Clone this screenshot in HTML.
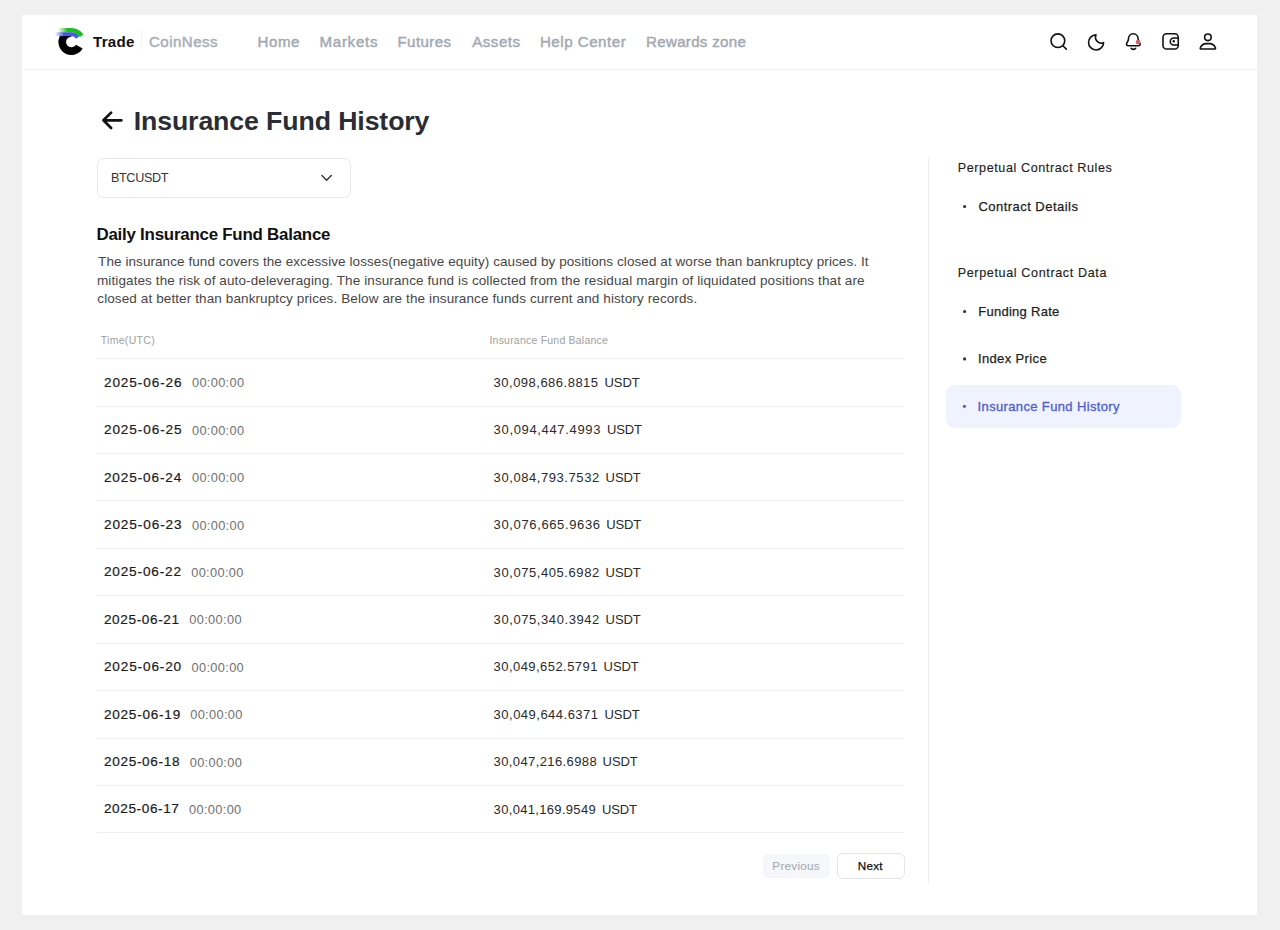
<!DOCTYPE html>
<html><head><meta charset="utf-8"><title>Insurance Fund History</title>
<style>
html,body{margin:0;padding:0;}
body{width:1280px;height:930px;background:#f0f0f0;position:relative;overflow:hidden;font-family:"Liberation Sans", sans-serif;}
.card{position:absolute;left:22px;top:15px;width:1235px;height:900px;background:#fff;}
.t{position:absolute;white-space:nowrap;}
.hdrline{position:absolute;left:24px;top:69px;width:1233px;height:1px;background:#f0f0f0;}
.sep{position:absolute;left:141px;top:30px;width:1px;height:19px;background:#f3f3f3;}
.hl{position:absolute;left:97px;width:807px;height:1px;background:#efefef;}
.select{position:absolute;left:97px;top:158px;width:252px;height:38px;border:1px solid #e8e8e8;border-radius:7px;}
.vdiv{position:absolute;left:928px;top:158px;width:1px;height:726px;background:#efefef;}
.active{position:absolute;left:946px;top:385px;width:235px;height:43px;background:#f0f2fe;border-radius:9px;}
.bprev{position:absolute;left:762.5px;top:854px;width:67px;height:24px;background:#f5f7fa;border-radius:5px;}
.bnext{position:absolute;left:837px;top:853px;width:65.5px;height:23.5px;border:1px solid #e5e5e5;border-radius:6px;}
.ov{position:absolute;left:0;top:0;}
</style></head><body>
<div class="card"></div>
<div class="hdrline"></div>
<div class="sep"></div>
<div class="select"></div>
<div class="vdiv"></div>
<div class="active"></div>
<div class="bprev"></div>
<div class="bnext"></div>
<div class="hl" style="top:358px"></div><div class="hl" style="top:406px"></div><div class="hl" style="top:453px"></div><div class="hl" style="top:500px"></div><div class="hl" style="top:548px"></div><div class="hl" style="top:595px"></div><div class="hl" style="top:643px"></div><div class="hl" style="top:690px"></div><div class="hl" style="top:738px"></div><div class="hl" style="top:785px"></div><div class="hl" style="top:832px"></div>
<div id="trade" class="t" style="left:93.09px;top:34.22px;font-size:15.1px;line-height:15.1px;color:#111111;font-weight:700;letter-spacing:0.237px;">Trade</div>
<div id="coinness" class="t" style="left:148.98px;top:34.22px;font-size:15.1px;line-height:15.1px;color:#a9aeb8;font-weight:400;letter-spacing:0.446px;-webkit-text-stroke:0.5px #a9aeb8;">CoinNess</div>
<div id="home" class="t" style="left:257.47px;top:34.22px;font-size:15.1px;line-height:15.1px;color:#a3a9b2;font-weight:400;letter-spacing:0.585px;-webkit-text-stroke:0.45px #a3a9b2;">Home</div>
<div id="markets" class="t" style="left:319.50px;top:34.22px;font-size:15.1px;line-height:15.1px;color:#a3a9b2;font-weight:400;letter-spacing:0.710px;-webkit-text-stroke:0.45px #a3a9b2;">Markets</div>
<div id="futures" class="t" style="left:397.48px;top:34.22px;font-size:15.1px;line-height:15.1px;color:#a3a9b2;font-weight:400;letter-spacing:0.421px;-webkit-text-stroke:0.45px #a3a9b2;">Futures</div>
<div id="assets" class="t" style="left:472.27px;top:34.22px;font-size:15.1px;line-height:15.1px;color:#a3a9b2;font-weight:400;letter-spacing:0.493px;-webkit-text-stroke:0.45px #a3a9b2;">Assets</div>
<div id="help" class="t" style="left:539.92px;top:34.22px;font-size:15.1px;line-height:15.1px;color:#a3a9b2;font-weight:400;letter-spacing:0.524px;-webkit-text-stroke:0.45px #a3a9b2;">Help Center</div>
<div id="rewards" class="t" style="left:646.10px;top:34.22px;font-size:15.1px;line-height:15.1px;color:#a3a9b2;font-weight:400;letter-spacing:0.294px;-webkit-text-stroke:0.45px #a3a9b2;">Rewards zone</div>
<div id="title" class="t" style="left:133.68px;top:107.60px;font-size:26.7px;line-height:26.7px;color:#2a2d33;font-weight:700;letter-spacing:-0.108px;">Insurance Fund History</div>
<div id="btc" class="t" style="left:110.93px;top:172.33px;font-size:12.6px;line-height:12.6px;color:#333333;font-weight:400;letter-spacing:-0.321px;">BTCUSDT</div>
<div id="h2" class="t" style="left:96.43px;top:226.79px;font-size:16.9px;line-height:16.9px;color:#111111;font-weight:700;letter-spacing:-0.231px;">Daily Insurance Fund Balance</div>
<div id="p0" class="t" style="left:98.09px;top:255.07px;font-size:13.5px;line-height:13.5px;color:#464646;font-weight:400;letter-spacing:0.076px;">The insurance fund covers the excessive losses(negative equity) caused by positions closed at worse than bankruptcy prices. It</div>
<div id="p1" class="t" style="left:97.00px;top:273.57px;font-size:13.5px;line-height:13.5px;color:#464646;font-weight:400;letter-spacing:0.106px;">mitigates the risk of auto-deleveraging. The insurance fund is collected from the residual margin of liquidated positions that are</div>
<div id="p2" class="t" style="left:97.27px;top:291.97px;font-size:13.5px;line-height:13.5px;color:#464646;font-weight:400;letter-spacing:0.111px;">closed at better than bankruptcy prices. Below are the insurance funds current and history records.</div>
<div id="th1" class="t" style="left:100.68px;top:334.86px;font-size:10.5px;line-height:10.5px;color:#a0a0a0;font-weight:400;letter-spacing:0.308px;">Time(UTC)</div>
<div id="th2" class="t" style="left:489.44px;top:334.86px;font-size:10.5px;line-height:10.5px;color:#a0a0a0;font-weight:400;letter-spacing:0.217px;">Insurance Fund Balance</div>
<div id="d0" class="t" style="left:103.92px;top:375.74px;font-size:13.6px;line-height:13.6px;color:#1b1b1b;font-weight:400;letter-spacing:0.912px;-webkit-text-stroke:0.2px #1b1b1b;">2025-06-26</div>
<div id="t0" class="t" style="left:191.94px;top:377.41px;font-size:12.8px;line-height:12.8px;color:#707070;font-weight:400;letter-spacing:0.329px;">00:00:00</div>
<div id="a0" class="t" style="left:493.61px;top:375.90px;font-size:13px;line-height:13px;color:#2a2a2a;font-weight:400;letter-spacing:0.489px;">30,098,686.8815</div>
<div id="u0" class="t" style="left:604.51px;top:375.90px;font-size:13px;line-height:13px;color:#2a2a2a;font-weight:400;letter-spacing:-0.058px;">USDT</div>
<div id="d1" class="t" style="left:103.92px;top:423.14px;font-size:13.6px;line-height:13.6px;color:#1b1b1b;font-weight:400;letter-spacing:0.911px;-webkit-text-stroke:0.2px #1b1b1b;">2025-06-25</div>
<div id="t1" class="t" style="left:191.94px;top:424.81px;font-size:12.8px;line-height:12.8px;color:#707070;font-weight:400;letter-spacing:0.329px;">00:00:00</div>
<div id="a1" class="t" style="left:493.61px;top:423.30px;font-size:13px;line-height:13px;color:#2a2a2a;font-weight:400;letter-spacing:0.658px;">30,094,447.4993</div>
<div id="u1" class="t" style="left:606.88px;top:423.30px;font-size:13px;line-height:13px;color:#2a2a2a;font-weight:400;letter-spacing:-0.090px;">USDT</div>
<div id="d2" class="t" style="left:103.92px;top:470.54px;font-size:13.6px;line-height:13.6px;color:#1b1b1b;font-weight:400;letter-spacing:0.870px;-webkit-text-stroke:0.2px #1b1b1b;">2025-06-24</div>
<div id="t2" class="t" style="left:191.94px;top:472.21px;font-size:12.8px;line-height:12.8px;color:#707070;font-weight:400;letter-spacing:0.329px;">00:00:00</div>
<div id="a2" class="t" style="left:493.61px;top:470.70px;font-size:13px;line-height:13px;color:#2a2a2a;font-weight:400;letter-spacing:0.569px;">30,084,793.7532</div>
<div id="u2" class="t" style="left:605.56px;top:470.70px;font-size:13px;line-height:13px;color:#2a2a2a;font-weight:400;letter-spacing:-0.055px;">USDT</div>
<div id="d3" class="t" style="left:103.92px;top:517.94px;font-size:13.6px;line-height:13.6px;color:#1b1b1b;font-weight:400;letter-spacing:0.910px;-webkit-text-stroke:0.2px #1b1b1b;">2025-06-23</div>
<div id="t3" class="t" style="left:191.94px;top:519.61px;font-size:12.8px;line-height:12.8px;color:#707070;font-weight:400;letter-spacing:0.329px;">00:00:00</div>
<div id="a3" class="t" style="left:493.61px;top:518.10px;font-size:13px;line-height:13px;color:#2a2a2a;font-weight:400;letter-spacing:0.628px;">30,076,665.9636</div>
<div id="u3" class="t" style="left:606.32px;top:518.10px;font-size:13px;line-height:13px;color:#2a2a2a;font-weight:400;letter-spacing:-0.133px;">USDT</div>
<div id="d4" class="t" style="left:103.92px;top:565.34px;font-size:13.6px;line-height:13.6px;color:#1b1b1b;font-weight:400;letter-spacing:0.842px;-webkit-text-stroke:0.2px #1b1b1b;">2025-06-22</div>
<div id="t4" class="t" style="left:191.19px;top:567.01px;font-size:12.8px;line-height:12.8px;color:#707070;font-weight:400;letter-spacing:0.345px;">00:00:00</div>
<div id="a4" class="t" style="left:493.61px;top:565.50px;font-size:13px;line-height:13px;color:#2a2a2a;font-weight:400;letter-spacing:0.569px;">30,075,405.6982</div>
<div id="u4" class="t" style="left:605.56px;top:565.50px;font-size:13px;line-height:13px;color:#2a2a2a;font-weight:400;letter-spacing:-0.055px;">USDT</div>
<div id="d5" class="t" style="left:103.92px;top:612.74px;font-size:13.6px;line-height:13.6px;color:#1b1b1b;font-weight:400;letter-spacing:0.623px;-webkit-text-stroke:0.2px #1b1b1b;">2025-06-21</div>
<div id="t5" class="t" style="left:189.23px;top:614.41px;font-size:12.8px;line-height:12.8px;color:#707070;font-weight:400;letter-spacing:0.358px;">00:00:00</div>
<div id="a5" class="t" style="left:493.61px;top:612.90px;font-size:13px;line-height:13px;color:#2a2a2a;font-weight:400;letter-spacing:0.581px;">30,075,340.3942</div>
<div id="u5" class="t" style="left:605.56px;top:612.90px;font-size:13px;line-height:13px;color:#2a2a2a;font-weight:400;letter-spacing:-0.055px;">USDT</div>
<div id="d6" class="t" style="left:103.92px;top:660.14px;font-size:13.6px;line-height:13.6px;color:#1b1b1b;font-weight:400;letter-spacing:0.859px;-webkit-text-stroke:0.2px #1b1b1b;">2025-06-20</div>
<div id="t6" class="t" style="left:191.44px;top:661.81px;font-size:12.8px;line-height:12.8px;color:#707070;font-weight:400;letter-spacing:0.352px;">00:00:00</div>
<div id="a6" class="t" style="left:493.61px;top:660.30px;font-size:13px;line-height:13px;color:#2a2a2a;font-weight:400;letter-spacing:0.443px;">30,049,652.5791</div>
<div id="u6" class="t" style="left:603.56px;top:660.30px;font-size:13px;line-height:13px;color:#2a2a2a;font-weight:400;letter-spacing:-0.055px;">USDT</div>
<div id="d7" class="t" style="left:103.92px;top:707.54px;font-size:13.6px;line-height:13.6px;color:#1b1b1b;font-weight:400;letter-spacing:0.750px;-webkit-text-stroke:0.2px #1b1b1b;">2025-06-19</div>
<div id="t7" class="t" style="left:190.19px;top:709.21px;font-size:12.8px;line-height:12.8px;color:#707070;font-weight:400;letter-spacing:0.345px;">00:00:00</div>
<div id="a7" class="t" style="left:493.61px;top:707.70px;font-size:13px;line-height:13px;color:#2a2a2a;font-weight:400;letter-spacing:0.486px;">30,049,644.6371</div>
<div id="u7" class="t" style="left:604.51px;top:707.70px;font-size:13px;line-height:13px;color:#2a2a2a;font-weight:400;letter-spacing:-0.058px;">USDT</div>
<div id="d8" class="t" style="left:103.92px;top:754.94px;font-size:13.6px;line-height:13.6px;color:#1b1b1b;font-weight:400;letter-spacing:0.688px;-webkit-text-stroke:0.2px #1b1b1b;">2025-06-18</div>
<div id="t8" class="t" style="left:189.73px;top:756.61px;font-size:12.8px;line-height:12.8px;color:#707070;font-weight:400;letter-spacing:0.322px;">00:00:00</div>
<div id="a8" class="t" style="left:493.61px;top:755.10px;font-size:13px;line-height:13px;color:#2a2a2a;font-weight:400;letter-spacing:0.392px;">30,047,216.6988</div>
<div id="u8" class="t" style="left:602.56px;top:755.10px;font-size:13px;line-height:13px;color:#2a2a2a;font-weight:400;letter-spacing:-0.055px;">USDT</div>
<div id="d9" class="t" style="left:103.92px;top:802.34px;font-size:13.6px;line-height:13.6px;color:#1b1b1b;font-weight:400;letter-spacing:0.610px;-webkit-text-stroke:0.2px #1b1b1b;">2025-06-17</div>
<div id="t9" class="t" style="left:188.95px;top:804.01px;font-size:12.8px;line-height:12.8px;color:#707070;font-weight:400;letter-spacing:0.353px;">00:00:00</div>
<div id="a9" class="t" style="left:493.61px;top:802.50px;font-size:13px;line-height:13px;color:#2a2a2a;font-weight:400;letter-spacing:0.321px;">30,041,169.9549</div>
<div id="u9" class="t" style="left:602.09px;top:802.50px;font-size:13px;line-height:13px;color:#2a2a2a;font-weight:400;letter-spacing:-0.136px;">USDT</div>
<div id="prev" class="t" style="left:772.36px;top:860.00px;font-size:11.7px;line-height:11.7px;color:#a2a6ae;font-weight:400;letter-spacing:0.254px;">Previous</div>
<div id="next" class="t" style="left:857.78px;top:859.80px;font-size:11.7px;line-height:11.7px;color:#111111;font-weight:400;letter-spacing:0.218px;-webkit-text-stroke:0.25px #111111;">Next</div>
<div id="s1" class="t" style="left:957.69px;top:162.33px;font-size:12.6px;line-height:12.6px;color:#1e1e1e;font-weight:400;letter-spacing:0.585px;-webkit-text-stroke:0.15px #1e1e1e;">Perpetual Contract Rules</div>
<div id="s2" class="t" style="left:978.39px;top:199.80px;font-size:13px;line-height:13px;color:#1e1e1e;font-weight:400;letter-spacing:0.472px;-webkit-text-stroke:0.25px #1e1e1e;">Contract Details</div>
<div id="s3" class="t" style="left:957.69px;top:267.33px;font-size:12.6px;line-height:12.6px;color:#1e1e1e;font-weight:400;letter-spacing:0.621px;-webkit-text-stroke:0.15px #1e1e1e;">Perpetual Contract Data</div>
<div id="s4" class="t" style="left:978.16px;top:304.80px;font-size:13px;line-height:13px;color:#1e1e1e;font-weight:400;letter-spacing:0.280px;-webkit-text-stroke:0.25px #1e1e1e;">Funding Rate</div>
<div id="s5" class="t" style="left:977.91px;top:352.30px;font-size:13px;line-height:13px;color:#1e1e1e;font-weight:400;letter-spacing:0.375px;-webkit-text-stroke:0.25px #1e1e1e;">Index Price</div>
<div id="s6" class="t" style="left:977.60px;top:400.10px;font-size:13px;line-height:13px;color:#4d5ecf;font-weight:400;letter-spacing:0.357px;-webkit-text-stroke:0.3px #4d5ecf;">Insurance Fund History</div>

<svg class="ov" width="1280" height="930" viewBox="0 0 1280 930">
 <defs>
  <linearGradient id="gG" x1="58" y1="0" x2="72" y2="0" gradientUnits="userSpaceOnUse">
   <stop offset="0" stop-color="#13c21a" stop-opacity="0"/><stop offset="0.7" stop-color="#13c21a" stop-opacity="1"/>
  </linearGradient>
  <linearGradient id="gB" x1="55" y1="0" x2="70" y2="0" gradientUnits="userSpaceOnUse">
   <stop offset="0" stop-color="#4a56e6" stop-opacity="0"/><stop offset="0.6" stop-color="#4a56e6" stop-opacity="1"/>
  </linearGradient>
 </defs>
 <!-- logo -->
 <path d="M82.66 48.5 A13 13 0 0 1 59.87 36 L71.4 36 L71.4 36.7 A5.3 5.3 0 1 0 75.99 44.65 Z" fill="#000"/>
 <path d="M71.4 28 A14 14 0 0 1 83.35 34.7 L79.8 36.9 A9.8 9.8 0 0 0 71.4 32.2 Z" fill="#13c21a"/>
 <rect x="58" y="28" width="13.9" height="4.2" fill="url(#gG)"/>
 <path d="M71.4 32.2 A9.8 9.8 0 0 1 79.32 36.24 L76.05 38.65 A5.9 5.9 0 0 0 71.4 36.1 Z" fill="#4a56e6"/>
 <rect x="55" y="32.2" width="16.9" height="3.9" fill="url(#gB)"/>
 <!-- arrow -->
 <path d="M121.4 120.3 H103.6 M111.1 112.6 L103.4 120.3 L111.1 128.0" fill="none" stroke="#111" stroke-width="2.7" stroke-linecap="round" stroke-linejoin="round"/>
 <!-- chevron -->
 <polyline points="321.9,175.4 326.6,180.2 331.3,175.4" fill="none" stroke="#333" stroke-width="1.4" stroke-linecap="round" stroke-linejoin="round"/>
 <!-- search -->
 <g fill="none" stroke="#111" stroke-width="1.6" stroke-linecap="round" stroke-linejoin="round">
  <circle cx="1057.9" cy="40.7" r="6.85"/>
  <line x1="1062.9" y1="45.7" x2="1066.3" y2="49.1"/>
  <path d="M1103.6 42.7 A7.52 7.52 0 1 1 1096 34.9 A5.9 5.9 0 0 0 1103.6 42.7 Z" />
  <path d="M1133.2 33.8 C1130.1 33.8 1128.4 36.3 1128.4 39.2 C1128.4 41.3 1126.5 42.4 1126.5 44.3 C1126.5 45.3 1127.2 45.8 1128.2 45.8 L1138.4 45.8 C1139.4 45.8 1140.1 45.3 1140.1 44.3 C1140.1 42.4 1138.2 41.3 1138.2 39.2 C1138.2 36.3 1136.3 33.8 1133.2 33.8 Z"/>
  <path d="M1131.2 48.4 Q1133.4 50.4 1135.6 48.4"/>
  <rect x="1163" y="33.75" width="15.25" height="15.25" rx="3.6"/>
  <path d="M1178.25 38 H1173.75 A3.5 3.5 0 0 0 1173.75 45 H1178.25"/>
  <circle cx="1207.9" cy="37.3" r="3.3"/>
  <path d="M1200.6 49 L1215 49 C1215.6 49 1215.6 48.3 1215.4 47.7 C1214.3 45 1212 43.65 1209.5 43.65 L1206.3 43.65 C1203.8 43.65 1201.5 45 1200.4 47.7 C1200.2 48.3 1200.2 49 1200.6 49 Z"/>
 </g>
 <circle cx="1173.75" cy="41.3" r="1.2" fill="#111"/>
 <circle cx="1138" cy="42" r="2.3" fill="#e85a64"/>
 <!-- bullets -->
 <circle cx="964.6" cy="206.5" r="1.6" fill="#333"/>
 <circle cx="964.6" cy="311.5" r="1.6" fill="#333"/>
 <circle cx="964.6" cy="358.9" r="1.6" fill="#333"/>
 <circle cx="964.4" cy="406.3" r="1.6" fill="#4b5ed6"/>
</svg>

</body></html>
